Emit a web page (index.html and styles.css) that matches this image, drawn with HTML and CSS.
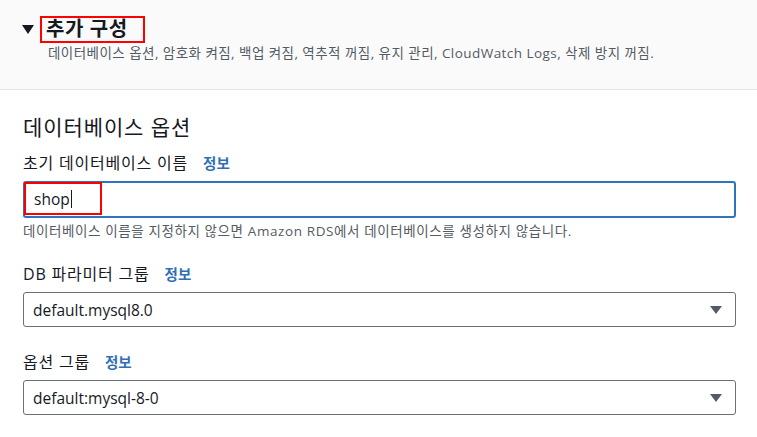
FILE: index.html
```html
<!DOCTYPE html>
<html lang="ko">
<head>
<meta charset="utf-8">
<link rel="stylesheet" href="styles.css">
</head>
<body>
<section class="header">
  <div class="title-row">
    <span class="caret"></span>
    <h2 class="title"><span class="mark">추가 구성</span></h2>
  </div>
  <p class="summary">데이터베이스 옵션, 암호화 켜짐, 백업 켜짐, 역추적 꺼짐, 유지 관리, CloudWatch Logs, 삭제 방지 꺼짐.</p>
</section>
<section class="body">
  <h3 class="section-title">데이터베이스 옵션</h3>
  <div class="field">
    <div class="label">초기 데이터베이스 이름 <a class="info">정보</a></div>
    <div class="input focused"><span class="mark-inline">shop<span class="cursor"></span></span></div>
    <div class="hint">데이터베이스 이름을 지정하지 않으면 Amazon RDS에서 데이터베이스를 생성하지 않습니다.</div>
  </div>
  <div class="field">
    <div class="label">DB 파라미터 그룹 <a class="info">정보</a></div>
    <div class="select"><span>default.mysql8.0</span><span class="arrow"></span></div>
  </div>
  <div class="field">
    <div class="label">옵션 그룹 <a class="info">정보</a></div>
    <div class="select"><span>default:mysql-8-0</span><span class="arrow"></span></div>
  </div>
</section>
</body>
</html>
```
FILE: styles.css
```css
* { box-sizing: border-box; }
html, body { margin: 0; padding: 0; background: #fff; }
body {
  font-family: "Open Sans", "Noto Sans CJK KR", sans-serif;
  color: #16191f;
  width: 757px;
  height: 437px;
  overflow: hidden;
}
.header {
  background: #fafafa;
  border-bottom: 1px solid #e4e6e6;
  height: 90px;
  padding: 16px 0 0 22px;
}
.title-row {
  display: flex;
  align-items: center;
  height: 27px;
}
.caret {
  width: 0; height: 0;
  border-left: 6.5px solid transparent;
  border-right: 6.5px solid transparent;
  border-top: 9px solid #16191f;
  margin-right: 6px;
}
.title {
  margin: 0;
  font-size: 20px;
  font-weight: 700;
  line-height: 23px;
}
.mark {
  display: block;
  border: 2.5px solid #f00;
  padding: 0 15px 0 4px;
  height: 27px;
  line-height: 22px;
  letter-spacing: 0.6px;
}
.summary {
  margin: 2px 0 0 26px;
  font-size: 13.5px;
  line-height: 17px;
  letter-spacing: 0.45px;
  color: #545b64;
}
.body {
  padding: 24px 21px 0 23px;
}
.section-title {
  margin: 0;
  font-size: 21px;
  font-weight: 400;
  line-height: 26px;
  letter-spacing: 0.9px;
}
.field { margin-top: 12px; }
.field + .field { margin-top: 24px; }
.label {
  font-size: 16px;
  line-height: 22px;
  letter-spacing: 0.8px;
  margin-bottom: 6px;
}
.info {
  color: #2f6fb6;
  font-size: 14.5px;
  font-weight: 600;
  letter-spacing: 0;
  margin-left: 10px;
}
.input {
  height: 37px;
  border: 2px solid #2f74c0;
  border-radius: 3px;
  display: flex;
  align-items: stretch;
}
.mark-inline {
  display: flex;
  align-items: center;
  border: 2.5px solid #f00;
  width: 78px;
  margin: -1px 0 1px -1px;
  padding-left: 8px;
  font-size: 15.5px;
}
.cursor {
  display: inline-block;
  width: 1px;
  height: 18px;
  background: #16191f;
  margin-left: 1px;
}
.hint {
  font-size: 13.5px;
  line-height: 16px;
  letter-spacing: 0.6px;
  color: #545b64;
  margin-top: 5px;
  margin-bottom: 3px;
}
.select {
  height: 35px;
  border: 1px solid #687078;
  border-radius: 3px;
  display: flex;
  align-items: center;
  justify-content: space-between;
  padding: 0 13px 0 9px;
  font-size: 15.5px;
}
.arrow {
  width: 0; height: 0;
  border-left: 6px solid transparent;
  border-right: 6px solid transparent;
  border-top: 8px solid #545b64;
}
```
